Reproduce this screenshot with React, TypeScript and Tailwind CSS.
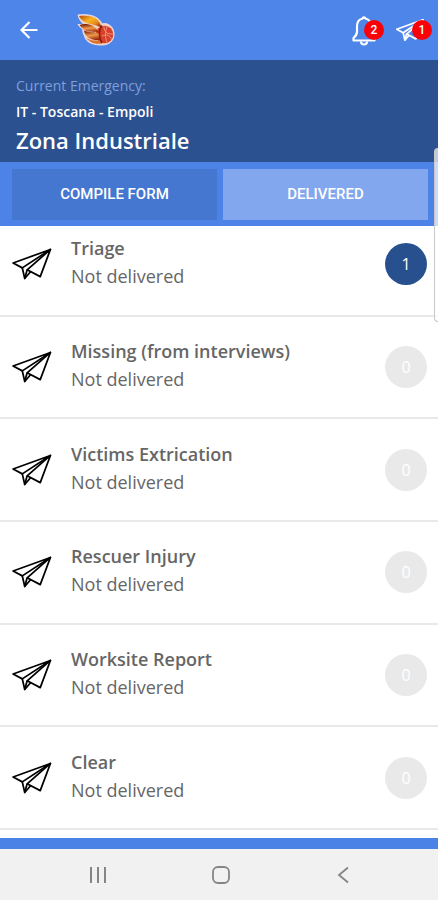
import { useState } from 'react';

interface FormEntry {
  title: string;
  status: string;
  count: number;
}

const forms: FormEntry[] = [
  { title: 'Triage', status: 'Not delivered', count: 1 },
  { title: 'Missing (from interviews)', status: 'Not delivered', count: 0 },
  { title: 'Victims Extrication', status: 'Not delivered', count: 0 },
  { title: 'Rescuer Injury', status: 'Not delivered', count: 0 },
  { title: 'Worksite Report', status: 'Not delivered', count: 0 },
  { title: 'Clear', status: 'Not delivered', count: 0 },
];

function PaperPlane({ className }: { className?: string }) {
  return (
    <svg viewBox="0 0 41 33" fill="none" stroke="currentColor" strokeLinejoin="round" className={className} aria-hidden="true">
      <path d="M1 15.5 39.5 1.5 10.5 20.5Z" />
      <path d="M39.5 1.5 15.5 22.5 29 29.5Z" />
      <path d="M10.5 20.5 13 31.5 19 24.5" />
      <path d="M13 31.5 15.5 22.5" />
    </svg>
  );
}

function BackArrow() {
  return (
    <svg viewBox="0 0 18 18" fill="none" stroke="currentColor" strokeWidth="2.2" className="w-[18px] h-[18px]" aria-hidden="true">
      <path d="M17.5 9H2M9.5 1 1.5 9l8 8" />
    </svg>
  );
}

function Bell() {
  return (
    <svg viewBox="0 0 24 31" fill="none" stroke="currentColor" strokeWidth="2.2" strokeLinejoin="round" className="w-6 h-[31px]" aria-hidden="true">
      <path d="M10.5 3.5a1.6 1.6 0 0 1 3 0c4 1 5.5 4 5.5 8v5c0 3 1 4.5 3.5 6.5v2.5H1.5v-2.5C4 21 5 19.5 5 16.5v-5c0-4 1.5-7 5.5-8Z" />
      <path d="M9 26.5a3 3 0 0 0 6 0" />
    </svg>
  );
}

// Fireball: three flame tails running into a round red head
function Logo() {
  return (
    <svg viewBox="0 0 40 32" className="w-10 h-8" role="img" aria-label="Logo">
      <defs>
        <linearGradient id="flame" x1="0" y1="0" x2="1" y2="0.8">
          <stop offset="0" stopColor="#b8480c" />
          <stop offset="0.45" stopColor="#f8b51f" />
          <stop offset="0.75" stopColor="#e88a1c" />
          <stop offset="1" stopColor="#8f230b" />
        </linearGradient>
        <linearGradient id="tail" x1="0.3" y1="0" x2="0.6" y2="1">
          <stop offset="0" stopColor="#7a1f08" />
          <stop offset="0.5" stopColor="#f09a4a" />
          <stop offset="1" stopColor="#9c260d" />
        </linearGradient>
      </defs>
      <path
        d="M2 1C9 0 17 1 21 4c3 2 4 4 5 6 7-2 12 4 12 10 0 7-5 11-12 11C18 31 10 29 8.5 22 7.5 20 6.5 18 7 15.5 5 14 3 12 2 10.5h6C5 8 3 5 2 1Z"
        fill="#f1cdbd"
        stroke="#efdfe2"
        strokeWidth="1"
        strokeLinejoin="round"
      />
      <circle cx="28.5" cy="20.5" r="8.8" fill="#d8402a" />
      <path d="M3 2c7-1 14 0 17.5 3 3 2.5 4.5 5.5 5 9.5C22 10 13 11 8 7.5 5.5 6 4 4 3 2Z" fill="url(#flame)" />
      <path d="M3.5 11c6-2 15-1 19.5 7.5-5-1.5-11 .5-15-3-1.5-1-3-2.5-4.5-4.5Z" fill="url(#tail)" />
      <path d="M8 16.5c5 2.5 11 .5 16 4 1 2 .5 4.5-1 5.5-7 .5-14-2.5-15-9.5Z" fill="url(#tail)" />
      <path d="M10.5 24c4 3 8 2.5 13 2.5l3 3C20 30.5 14 29 10.5 24Z" fill="#d9742f" />
      <path d="M26 11.5c-3.5 4-3.5 12 0 17.5" stroke="#8c1c0c" strokeWidth="1.5" fill="none" />
      <path d="M28 12.5c0 5 3 8 9 7.5M26 22c4-2 8-1 9.5 3.5M31 12.5c-2 5-2 11 0 16" stroke="#f0998a" strokeWidth="0.9" fill="none" />
    </svg>
  );
}

function Badge({ children }: { children: number }) {
  return (
    <span className="absolute top-0.5 -right-2 flex w-5 h-5 items-center justify-center rounded-full bg-[#fb0007] font-[Roboto] text-xs font-medium text-white">
      {children}
    </span>
  );
}

export default function App() {
  const [tab, setTab] = useState<'compile' | 'delivered'>('compile');

  return (
    <div className="relative flex min-h-screen flex-col bg-white font-['Open_Sans',sans-serif]">
      <header className="flex h-[60px] items-center bg-[#4d85e8] pl-5 pr-3.5 text-white">
        <button aria-label="Back">
          <BackArrow />
        </button>
        <div className="ml-[38px]">
          <Logo />
        </div>
        <div className="ml-auto flex items-center gap-5">
          <button aria-label="Notifications" className="relative flex h-6 items-center">
            <Bell />
            <Badge>2</Badge>
          </button>
          <button aria-label="Outbox" className="relative flex h-6 items-center">
            <PaperPlane className="w-7 h-6 stroke-[2.5]" />
            <Badge>1</Badge>
          </button>
        </div>
      </header>

      <section className="h-[102px] bg-[#2c5190] px-4 pt-4 text-white">
        <p className="text-sm leading-5 text-[#7f9fdc]">Current Emergency:</p>
        <p className="mt-1 text-sm leading-6 font-semibold">IT - Toscana - Empoli</p>
        <h1 className="text-[22px] leading-8 font-semibold">Zona Industriale</h1>
      </section>

      <div className="relative z-10 grid grid-cols-2 gap-1.5 bg-[#4d83e7] pt-[7px] pr-2.5 pb-1.5 pl-3 font-[Roboto] text-[15px] font-medium text-white">
        <button onClick={() => setTab('compile')} aria-pressed={tab === 'compile'} className="h-[51px] bg-[#4577d0]">
          COMPILE FORM
        </button>
        <button onClick={() => setTab('delivered')} aria-pressed={tab === 'delivered'} className="h-[51px] bg-[#82a7ee]">
          DELIVERED
        </button>
      </div>

      <ul className="-mt-3 flex flex-1 flex-col">
        {forms.map((form) => (
          <li key={form.title} className="flex flex-1 items-center border-b-2 border-[#e9e9e9] py-4 pr-[11px] pl-3">
            <PaperPlane className="w-10 h-8 shrink-0 stroke-[1.8] text-black" />
            <div className="ml-[19px] flex-1 pb-1 text-lg leading-7 text-[#666666]">
              <h2 className="font-semibold">{form.title}</h2>
              <p>{form.status}</p>
            </div>
            <span
              className={`flex w-[42px] h-[42px] items-center justify-center rounded-full text-base text-white ${
                form.count > 0 ? 'bg-[#28508f]' : 'bg-[#e9e9e9]'
              }`}
            >
              {form.count}
            </span>
          </li>
        ))}
      </ul>

      <div className="mt-2 h-[11px] bg-[#4a82e6]" />

      <nav className="flex h-[51px] items-center justify-between bg-[#f1f1f1] pr-19 pl-20 text-[#858585]">
        <button aria-label="Recent apps" className="flex w-9 h-9 items-center justify-center">
          <svg viewBox="0 0 18 18" fill="none" stroke="currentColor" strokeWidth="2" className="w-[18px] h-[18px]" aria-hidden="true">
            <path d="M2 1v16M9 1v16M16 1v16" />
          </svg>
        </button>
        <button aria-label="Home" className="flex w-9 h-9 items-center justify-center">
          <svg viewBox="0 0 18 18" fill="none" stroke="currentColor" strokeWidth="1.8" className="w-[18px] h-[18px]" aria-hidden="true">
            <rect x="1" y="1" width="16" height="16" rx="5" />
          </svg>
        </button>
        <button aria-label="Back to previous app" className="flex w-9 h-9 items-center justify-center">
          <svg viewBox="0 0 18 18" fill="none" stroke="currentColor" strokeWidth="1.8" className="w-[18px] h-[18px]" aria-hidden="true">
            <path d="M13 1.5 4 9l9 7.5" />
          </svg>
        </button>
      </nav>

      {/* edge panel handle */}
      <div className="absolute top-37 right-0 z-20 h-[174px] w-1 rounded-l border border-r-0 border-[#c9c9c9] bg-white/70" />
    </div>
  );
}
